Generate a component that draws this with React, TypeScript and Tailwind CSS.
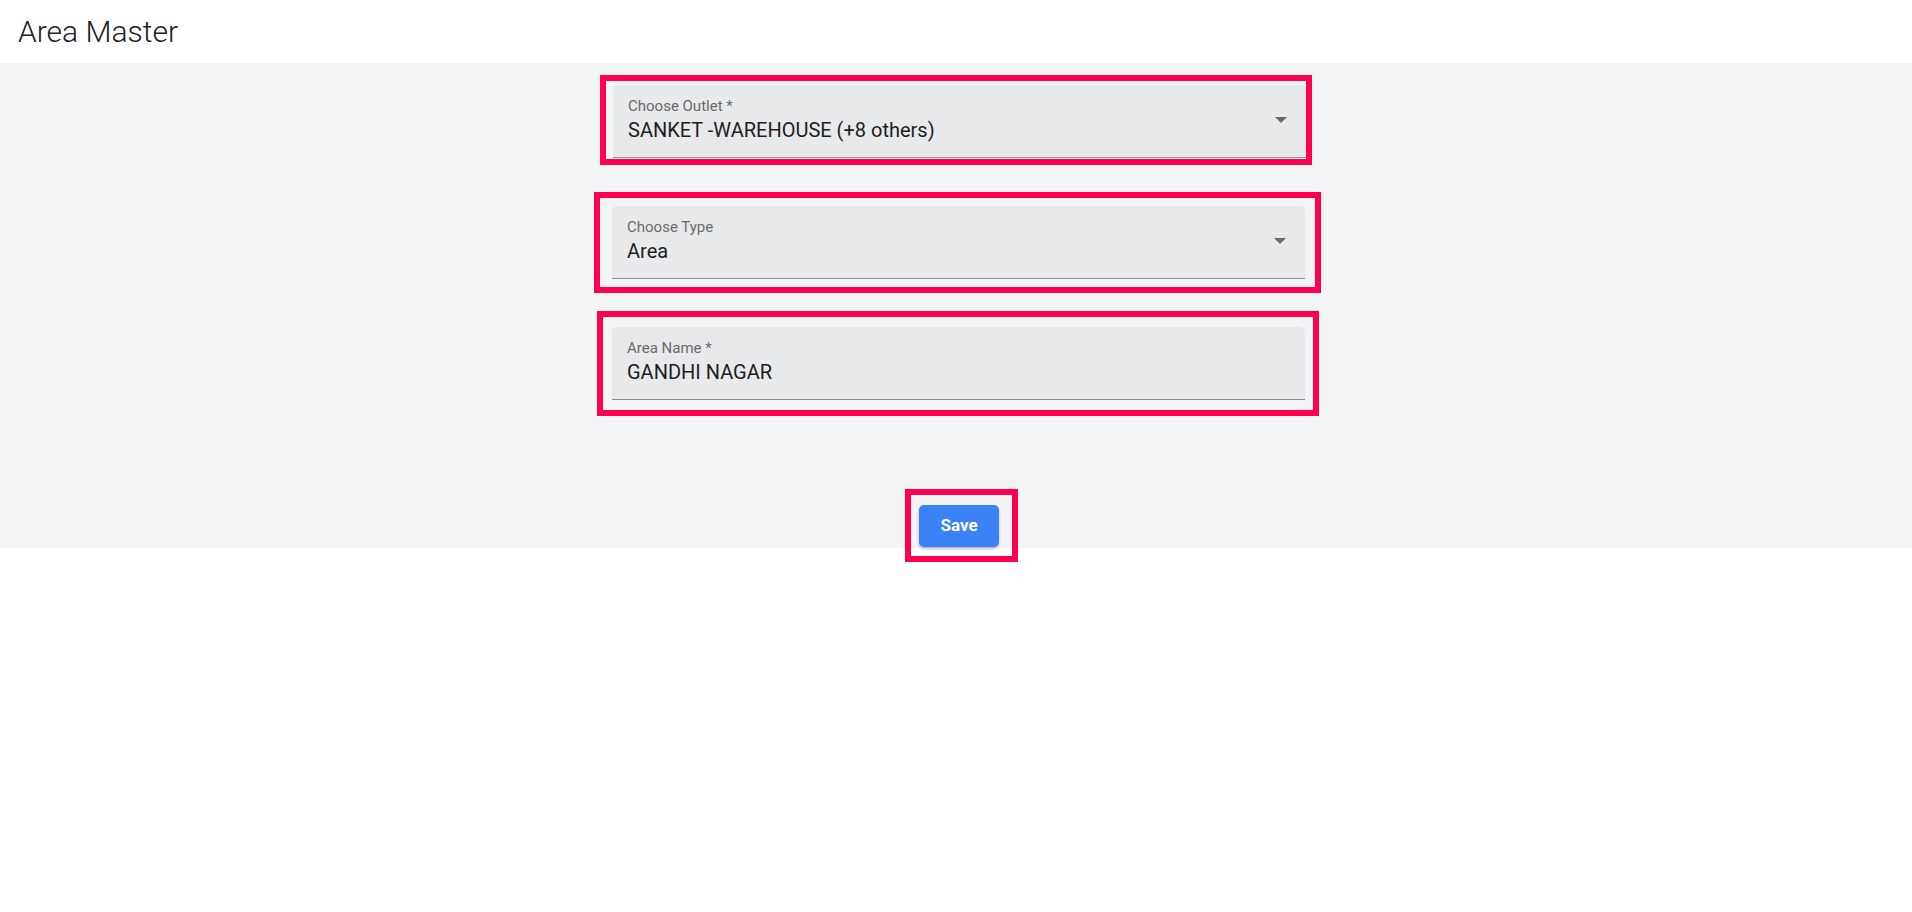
import React from "react";

interface FieldProps {
  label: string;
  value: string;
  select?: boolean;
}

/* MUI-style filled field */
function FilledField({ label, value, select }: FieldProps) {
  return (
    <div className="flex h-[73px] w-[693px] items-center rounded-t-[5px] border-b border-[#8e8e8e] bg-[#e8e9eb] pl-[15px] pr-[19px]">
      <div className="flex-1 self-start pt-[13px]">
        <div className="text-[15px] leading-[17px] text-[#6a6a6a]">{label}</div>
        <div className="mt-[4px] text-[20px] leading-[23px] text-[#1e1e1e]">{value}</div>
      </div>
      {select && (
        <svg width="12" height="6" viewBox="0 0 12 6" className="mb-[3px]">
          <path d="M0 0h12L6 6z" fill="#6b6b6b" />
        </svg>
      )}
    </div>
  );
}

export default function App() {
  return (
    <div className="min-h-screen bg-white font-['Roboto',sans-serif]">
      {/* header */}
      <div className="flex h-[63px] items-center pl-[18px]">
        <h1 className="text-[30px] font-light leading-none text-[#202124]">Area Master</h1>
      </div>

      {/* form */}
      <div className="flex flex-col items-center bg-[#f3f4f6] pt-[12px]">
        <div className="w-[712px] border-[6px] border-[#ff0050] pb-[1px] pl-[7px] pt-[4px]">
          <FilledField label="Choose Outlet *" value="SANKET -WAREHOUSE (+8 others)" select />
        </div>

        <div className="ml-[3px] mt-[27px] w-[727px] border-[6px] border-[#ff0050] pb-[8px] pl-[12px] pr-[10px] pt-[8px]">
          <FilledField label="Choose Type" value="Area" select />
        </div>

        <div className="ml-[4px] mt-[18px] w-[722px] border-[6px] border-[#ff0050] pb-[10px] pl-[9px] pr-[8px] pt-[10px]">
          <FilledField label="Area Name *" value="GANDHI NAGAR" />
        </div>

        <div className="relative z-10 mb-[-14px] ml-[11px] mt-[73px] w-[113px] border-[6px] border-[#ff0050] pb-[9px] pl-[8px] pr-[13px] pt-[10px]">
          <button className="h-[42px] w-[80px] rounded-[5px] bg-[#3b82f6] text-[17px] font-bold text-white shadow-[0_2px_3px_rgba(0,0,0,0.25)]">
            Save
          </button>
        </div>
      </div>
    </div>
  );
}
